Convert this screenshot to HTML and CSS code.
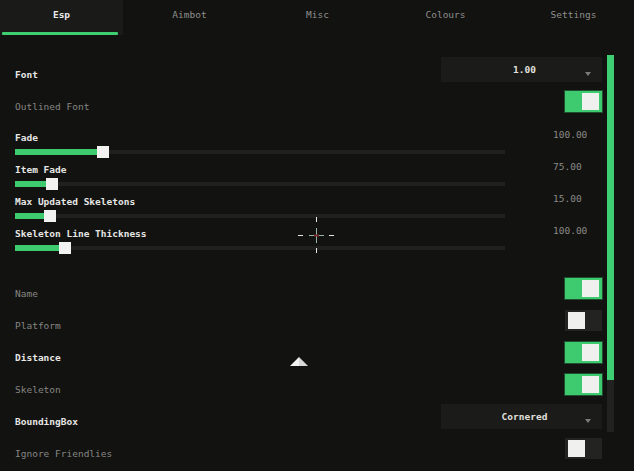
FILE: index.html
```html
<!DOCTYPE html>
<html lang="en">

<head>
    <meta charset="UTF-8">
    <meta name="viewport" content="width=device-width, initial-scale=1.0">
    <title>Menu</title>
    <link rel="stylesheet" href="styles.css">
</head>

<body>
    <div class="tabs">
        <div class="tab active">Esp</div>
        <div class="tab">Aimbot</div>
        <div class="tab">Misc</div>
        <div class="tab">Colours</div>
        <div class="tab">Settings</div>
    </div>
    <div class="main">
        <div class="options">
            <div class="row">
                <span class="label strong">Font</span>
                <div class="combo"><span>1.00</span><i class="arrow"></i></div>
            </div>
            <div class="row">
                <span class="label">Outlined Font</span>
                <div class="toggle on"><i></i></div>
            </div>

            <div class="sliders">
                <div class="slider">
                    <span class="label strong">Fade</span>
                    <span class="value">100.00</span>
                    <div class="track"><div class="fill" style="width: 82px"></div><div class="knob" style="left: 82px"></div></div>
                </div>
                <div class="slider">
                    <span class="label strong">Item Fade</span>
                    <span class="value">75.00</span>
                    <div class="track"><div class="fill" style="width: 31px"></div><div class="knob" style="left: 31px"></div></div>
                </div>
                <div class="slider">
                    <span class="label strong">Max Updated Skeletons</span>
                    <span class="value">15.00</span>
                    <div class="track"><div class="fill" style="width: 29px"></div><div class="knob" style="left: 29px"></div></div>
                </div>
                <div class="slider">
                    <span class="label strong">Skeleton Line Thickness</span>
                    <span class="value">100.00</span>
                    <div class="track"><div class="fill" style="width: 44px"></div><div class="knob" style="left: 44px"></div></div>
                </div>
            </div>

            <div class="row">
                <span class="label">Name</span>
                <div class="toggle on"><i></i></div>
            </div>
            <div class="row">
                <span class="label">Platform</span>
                <div class="toggle"><i></i></div>
            </div>
            <div class="row">
                <span class="label strong">Distance</span>
                <div class="toggle on"><i></i></div>
            </div>
            <div class="row">
                <span class="label">Skeleton</span>
                <div class="toggle on"><i></i></div>
            </div>
            <div class="row">
                <span class="label strong">BoundingBox</span>
                <div class="combo"><span>Cornered</span><i class="arrow"></i></div>
            </div>
            <div class="row">
                <span class="label">Ignore Friendlies</span>
                <div class="toggle"><i></i></div>
            </div>
        </div>
        <div class="scrollbar"><div class="thumb"></div></div>

        <!-- crosshair + cursor drawn over the menu -->
        <svg class="crosshair" width="40" height="40" viewBox="0 0 40 40">
            <g stroke="#e8e8e8" stroke-width="1">
                <line x1="2" y1="20.5" x2="7" y2="20.5" />
                <line x1="33" y1="20.5" x2="38" y2="20.5" />
                <line x1="20.5" y1="2" x2="20.5" y2="7" />
                <line x1="20.5" y1="33" x2="20.5" y2="38" />
                <line x1="13" y1="20.5" x2="28" y2="20.5" stroke="#9ab59f" />
                <line x1="20.5" y1="13" x2="20.5" y2="28" stroke="#9ab59f" />
            </g>
            <rect x="18" y="19.5" width="5" height="2" fill="#7a2a30" />
        </svg>
        <svg class="cursor" width="20" height="12" viewBox="0 0 20 12">
            <polygon points="10,1 10,10 1,10" fill="#f2f2f2" />
            <polygon points="10,1 19,10 10,10" fill="#d8d8d8" />
        </svg>
    </div>
</body>

</html>
```

FILE: styles.css
```css
body {
    margin: 0;
    width: 634px;
    height: 471px;
    overflow: hidden;
    background-color: #121210;
    font-family: "DejaVu Sans Mono", "Liberation Mono", monospace;
    font-size: 9.5px;
    line-height: 12px;
    color: #868684;
}
.tabs {
    display: flex;
    gap: 5px;
    height: 35px;
}
.tab {
    position: relative;
    flex: 0 0 123px;
    text-align: center;
    line-height: 30px;
    color: #8e8e8c;
}
.tab.active {
    background-color: #1a1a18;
    color: #ececec;
    font-weight: bold;
}
.tab.active::after {
    content: "";
    position: absolute;
    left: 2px;
    bottom: 0;
    width: 116px;
    height: 3px;
    border-radius: 1px;
    background-color: #3fcf73;
}
.main {
    position: relative;
    display: flex;
    gap: 5px;
}
.options {
    width: 587px;
    padding: 21px 0 0 15px;
}
.row {
    display: flex;
    justify-content: space-between;
    align-items: flex-start;
    height: 32px;
}
.label {
    margin-top: 13px;
    color: #868684;
}
.label.strong {
    color: #e6e6e4;
    font-weight: bold;
}
.combo {
    position: relative;
    width: 161px;
    height: 25px;
    margin-top: 1px;
    background-color: #1b1b19;
    text-align: center;
    line-height: 25px;
    color: #e0e0de;
    font-weight: bold;
}
.combo span {
    margin-left: 6px;
}
.combo .arrow {
    position: absolute;
    right: 11px;
    top: 15px;
    border-left: 3px solid transparent;
    border-right: 3px solid transparent;
    border-top: 4px solid #7c7c7a;
}
.toggle {
    display: flex;
    width: 37px;
    height: 21px;
    margin-top: 3px;
    padding: 2px 3px;
    box-sizing: border-box;
    background-color: #232321;
}
.toggle i {
    width: 17px;
    height: 17px;
    background-color: #f0f0ee;
}
.toggle.on {
    justify-content: flex-end;
    background-color: #3ecb6f;
    box-shadow: 0 0 0 1px #1f4f2f;
}
.sliders {
    margin: 12px 0 15px;
}
.slider {
    display: grid;
    grid-template-columns: 490px auto;
    column-gap: 48px;
    row-gap: 2px;
    align-content: start;
    height: 32px;
}
.slider .label {
    margin-top: 0;
}
.slider .value {
    margin-top: -3px;
    color: #8a8a88;
}
.track {
    position: relative;
    height: 12px;
}
.track::before {
    content: "";
    position: absolute;
    left: 0;
    right: 0;
    top: 4px;
    height: 4px;
    background-color: #20201e;
}
.fill {
    position: absolute;
    left: 0;
    top: 3px;
    height: 6px;
    background-color: #3ecb6f;
}
.knob {
    position: absolute;
    top: 0;
    width: 12px;
    height: 12px;
    background-color: #f2f2f0;
}
.scrollbar {
    width: 7px;
    height: 377px;
    margin-top: 20px;
    background-color: #222220;
}
.thumb {
    height: 325px;
    background-color: #3fcf73;
}
.crosshair {
    position: absolute;
    left: 296px;
    top: 180px;
}
.cursor {
    position: absolute;
    left: 289px;
    top: 321px;
}
```
